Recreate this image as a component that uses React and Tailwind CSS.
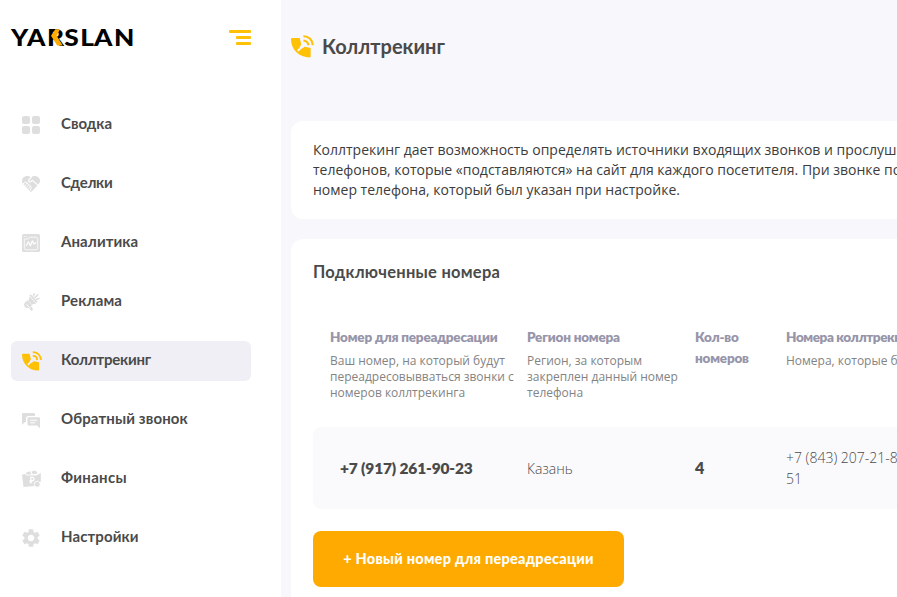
import { MdSettings } from 'react-icons/md';
import clsx from 'clsx';

function Logo() {
  return (
    <svg width="124" height="20" viewBox="0 0 124 20" className="block overflow-visible">
      <text x="0 13.700 30.800 45.500 59.200 71 88" y="17.500" transform="scale(1.170 1)" fontSize="22.500" fontWeight="900" fontFamily="Lato, 'Open Sans', sans-serif">
        YARSLAN
      </text>
      <path d="M44.300 1.200h4.700l-3.400 6.500 6.200 9.900h-5.600L40 7.700z" fill="#ffaa00" />
    </svg>
  );
}

function MenuIcon() {
  return (
    <svg width="23" height="16" viewBox="0 0 23 16" fill="#ffc107">
      <rect x="0" y="0" width="22" height="3" rx="1" />
      <rect x="7" y="6" width="15" height="3" rx="1" />
      <rect x="7" y="12" width="15" height="3" rx="1" />
    </svg>
  );
}

function GridIcon() {
  return (
    <svg width="18" height="18" viewBox="0 0 18 18" fill="currentColor">
      <rect width="8" height="8" rx="2" />
      <rect x="10" width="8" height="8" rx="2" />
      <rect y="10" width="8" height="8" rx="2" />
      <rect x="10" y="10" width="8" height="8" rx="2" />
    </svg>
  );
}

function DealsIcon() {
  return (
    <svg width="18" height="16" viewBox="0 0 18 16">
      <path d="M9 1.500C11.500-.6 14.700-.3 16.600 1.600c2 2 1.800 4.800 0 6.600L10 15.200c-.7.700-1.400.7-2.100 0L1.400 8.200C-.4 6.400-.5 3.600 1.400 1.600 3.300-.3 6.500-.6 9 1.500z" fill="currentColor" />
      <g fill="none" stroke="#fff" strokeLinecap="round" strokeLinejoin="round">
        <path d="M9.300 1.300L6.700 3.900c-.6 1.700 1.300 2.500 2.500 1.400l1.300-1 5.600 5" strokeWidth="1.100" />
        <path d="M.8 8.200l2.300-2.100c1-.6 1.800.2 1.700 1.100 1-.3 1.900.6 1.600 1.600 1-.2 1.900.6 1.600 1.600 1-.2 1.700.7 1.400 1.500L8 14.500" strokeWidth="1" />
        <path d="M2.800 9.700l1.900-2.300M4.600 11.300l1.700-2.200M6.400 12.900l1.600-2.200" strokeWidth=".8" />
      </g>
    </svg>
  );
}

function AnalyticsIcon() {
  return (
    <svg width="18" height="18" viewBox="0 0 18 18">
      <rect width="18" height="18" rx="1.500" fill="currentColor" />
      <g fill="none" stroke="#fff" strokeLinecap="round" strokeLinejoin="round">
        <path d="M8 3.200h6.200a1.500 1.500 0 0 1 1.500 1.500v9.600a1.500 1.500 0 0 1-1.500 1.500H3.800a1.500 1.500 0 0 1-1.500-1.500V5h3.600z" strokeWidth=".8" />
        <path d="M2.200 2.500h.2M4.600 2.500h.2" strokeWidth="1" />
        <path d="M4.200 11.500l2.200-3.700 2 4 2-5 1.500 3.200 2-1.200" strokeWidth="1.200" />
      </g>
    </svg>
  );
}

function AdsIcon() {
  return (
    <svg width="18" height="18" viewBox="0 0 18 18" fill="currentColor">
      <path d="M7.600 3.600l6.600 6.900-4.200 1.100-3.600-3.700z" />
      <path d="M5.500 7.300l4.700 4.900-2.400 2.200c-3.600 2.100-7.200-1.300-5.100-4.700z" />
      <path d="M7.200 15.600l2.200-1.800 1.800 2.400-1.700 1.700z" />
      <path d="M7.500 2.500l1.200-1.200 7 7.400-1.200 1.200z" />
      <path d="M11.500 2.700l.7-1.900M13 4.500l2.700-2.700M14.600 6.300l2.400-.7" stroke="currentColor" strokeWidth="1.500" strokeLinecap="round" />
      <path d="M4.600 11.500l2.300 2.300" stroke="#fff" strokeWidth="1" strokeLinecap="round" />
    </svg>
  );
}

function PhoneIcon({ size = 20, notch = 'stroke-[#f0eff5]' }) {
  return (
    <svg width={size} height={size} viewBox="0 0 20 20" className="shrink-0 text-[#ffc107]" fill="currentColor">
      <path d="M1 2.700h6.600l1.200 5.100 2.300 2.300 6 1.200v7.400a.8.800 0 0 1-.8.800C7.300 19.500 0 12.900 0 3.700a1 1 0 0 1 1-1z" />
      <path d="M6.400 13.300L8 11.700m0 0l2.900-1.700M8 11.700l1.700-3.200" className={notch} strokeWidth="1.700" strokeLinecap="round" />
      <g fill="none" stroke="currentColor" strokeWidth="1.900">
        <path d="M10.800 1.100c4.700 0 8.100 3.300 8.100 7.900" />
        <path d="M10.800 4.900c2.500 0 4.300 1.700 4.300 4.100" />
      </g>
    </svg>
  );
}

function ChatIcon() {
  return (
    <svg width="18" height="16" viewBox="0 0 18 16" className="mt-0.5">
      <path d="M1 0h11a1 1 0 0 1 1 1v2H6.500A2.500 2.500 0 0 0 4 5.500V9H3l-3 2.800V1a1 1 0 0 1 1-1z" fill="currentColor" />
      <path d="M6.500 4.300H17a1 1 0 0 1 1 1v10L15 12.500H6.500a1 1 0 0 1-1-1V5.300a1 1 0 0 1 1-1z" fill="currentColor" />
      <path d="M8.200 7.200h7M8.200 9.700h5" stroke="#fff" strokeWidth="1.100" />
    </svg>
  );
}

function FinanceIcon() {
  return (
    <svg width="19" height="18" viewBox="0 0 19 18">
      <g fill="currentColor">
        <path d="M0 4.800L3.200 4l1.200 1.600h10L18.800 3v8.200l-3.200 4.600L1.500 17z" />
        <path d="M3.500 3L8 1.300l1.500 3.200H5zM9.500 1.500l4-.9 2.200 2.900-5 .8z" />
      </g>
      <path d="M8.800 13.400V7.400h1.700a1.500 1.500 0 0 1 0 3.200H7.600M7.600 12.100h2.600" fill="none" stroke="#fff" strokeWidth="1.200" />
      <circle cx="15.200" cy="14.300" r="3" fill="currentColor" stroke="#fff" strokeWidth=".9" />
    </svg>
  );
}

function SettingsIcon() {
  return <MdSettings size={22} className="-ml-0.5 shrink-0" />;
}

const menu = [
  { title: 'Сводка', icon: GridIcon, tracking: 'tracking-normal' },
  { title: 'Сделки', icon: DealsIcon, tracking: 'tracking-[-0.3px]' },
  { title: 'Аналитика', icon: AnalyticsIcon, tracking: 'tracking-[0.1px]' },
  { title: 'Реклама', icon: AdsIcon, tracking: 'tracking-[0.15px]' },
  { title: 'Коллтрекинг', icon: PhoneIcon, tracking: 'tracking-[-0.2px]', active: true },
  { title: 'Обратный звонок', icon: ChatIcon, tracking: 'tracking-[0.13px]' },
  { title: 'Финансы', icon: FinanceIcon, tracking: 'tracking-[0.3px]' },
  { title: 'Настройки', icon: SettingsIcon, tracking: 'tracking-[0.1px]' },
];

function Sidebar() {
  return (
    <aside className="w-[281px] shrink-0 bg-white px-[11px]">
      <div className="flex h-[105px] items-start justify-between pt-7 pr-[18px]">
        <Logo />
        <div className="pt-0.5"><MenuIcon /></div>
      </div>
      <nav className="flex w-60 flex-col gap-[19px]">
        {menu.map(({ title, icon: Icon, tracking, active }) => (
          <a
            key={title}
            href="#"
            className={clsx('flex h-10 items-center rounded-md pl-[11px]', active && 'bg-[#f0eff5]')}
          >
            <span className="flex w-[39px] items-center text-[#dedede]">
              <Icon />
            </span>
            <span className={clsx('pb-[3px] font-[Lato] text-[15px] font-bold whitespace-nowrap text-[#4a4a4a]', tracking)}>
              {title}
            </span>
          </a>
        ))}
      </nav>
    </aside>
  );
}

function ColumnHead({ title, children, className, tracking = 'tracking-[-0.2px]' }) {
  return (
    <div className={clsx('shrink-0', className)}>
      <div className={clsx('font-[Lato] text-[13.5px] leading-[21px] font-extrabold text-[#9795aa]', tracking)}>{title}</div>
      {children && <div className="mt-[5px] text-xs leading-4 whitespace-nowrap text-[#838383]">{children}</div>}
    </div>
  );
}

function NumbersTable() {
  return (
    <div>
      <div className="flex h-[100px] pl-[17px]">
        <ColumnHead title="Номер для переадресации" className="w-[197px]">
          Ваш номер, на который будут<br />
          переадресовывваться звонки с<br />
          номеров коллтрекинга
        </ColumnHead>
        <ColumnHead title="Регион номера" className="w-[168px]">
          Регион, за которым<br />
          закреплен данный номер<br />
          телефона
        </ColumnHead>
        <ColumnHead title={<>Кол-во<br />номеров</>} className="w-[91px]" />
        <ColumnHead title="Номера коллтрекинга" className="w-[300px]" tracking="tracking-[-0.4px]">
          Номера, которые будут
        </ColumnHead>
      </div>
      <div className="flex h-[82px] items-center rounded-l-lg bg-[#fafafd] pl-[27px] text-sm leading-[21px] text-[#4a4a4a]">
        <div className="w-[187px] shrink-0 font-[Lato] text-[15.5px] font-extrabold tracking-[-0.15px]">+7 (917) 261-90-23</div>
        <div className="w-[168px] shrink-0 font-light">Казань</div>
        <div className="w-[91px] shrink-0 font-[Lato] text-base font-extrabold">4</div>
        <div className="w-[300px] shrink-0 font-light">
          +7 (843) 207-21-80, +7 (843)<br />
          51
        </div>
      </div>
    </div>
  );
}

export default function App() {
  return (
    <div className="flex h-[597px] w-[897px] overflow-hidden bg-[#f8f7fc] font-['Open_Sans',sans-serif]">
      <Sidebar />
      <main className="min-w-0 flex-1 pl-2.5">
        <header className="flex h-[121px] items-start pt-[35px]">
          <PhoneIcon size={23} notch="stroke-[#f8f7fc]" />
          <h1 className="ml-2 font-[Lato] text-xl leading-[22px] font-bold text-[#4a4a4a]">Коллтрекинг</h1>
        </header>

        <section className="h-[98px] rounded-l-xl bg-white pt-[19px] pl-[22px] text-sm leading-5 whitespace-nowrap text-[#3c3c3c]">
          Коллтрекинг дает возможность определять источники входящих звонков и прослушивать<br />
          телефонов, которые «подставляются» на сайт для каждого посетителя. При звонке по<br />
          номер телефона, который был указан при настройке.
        </section>

        <section className="mt-5 h-[400px] rounded-tl-xl bg-white pt-[22px] pl-[22px]">
          <h2 className="mb-[43px] font-[Lato] text-[16.5px] leading-[23px] font-bold tracking-[0.25px] text-[#4a4a4a]">Подключенные номера</h2>
          <NumbersTable />
          <button className="mt-[22px] h-14 w-[311px] rounded-lg bg-[#ffaa00] font-[Lato] text-[14.5px] font-black tracking-[0.27px] text-white">
            + Новый номер для переадресации
          </button>
        </section>
      </main>
    </div>
  );
}
